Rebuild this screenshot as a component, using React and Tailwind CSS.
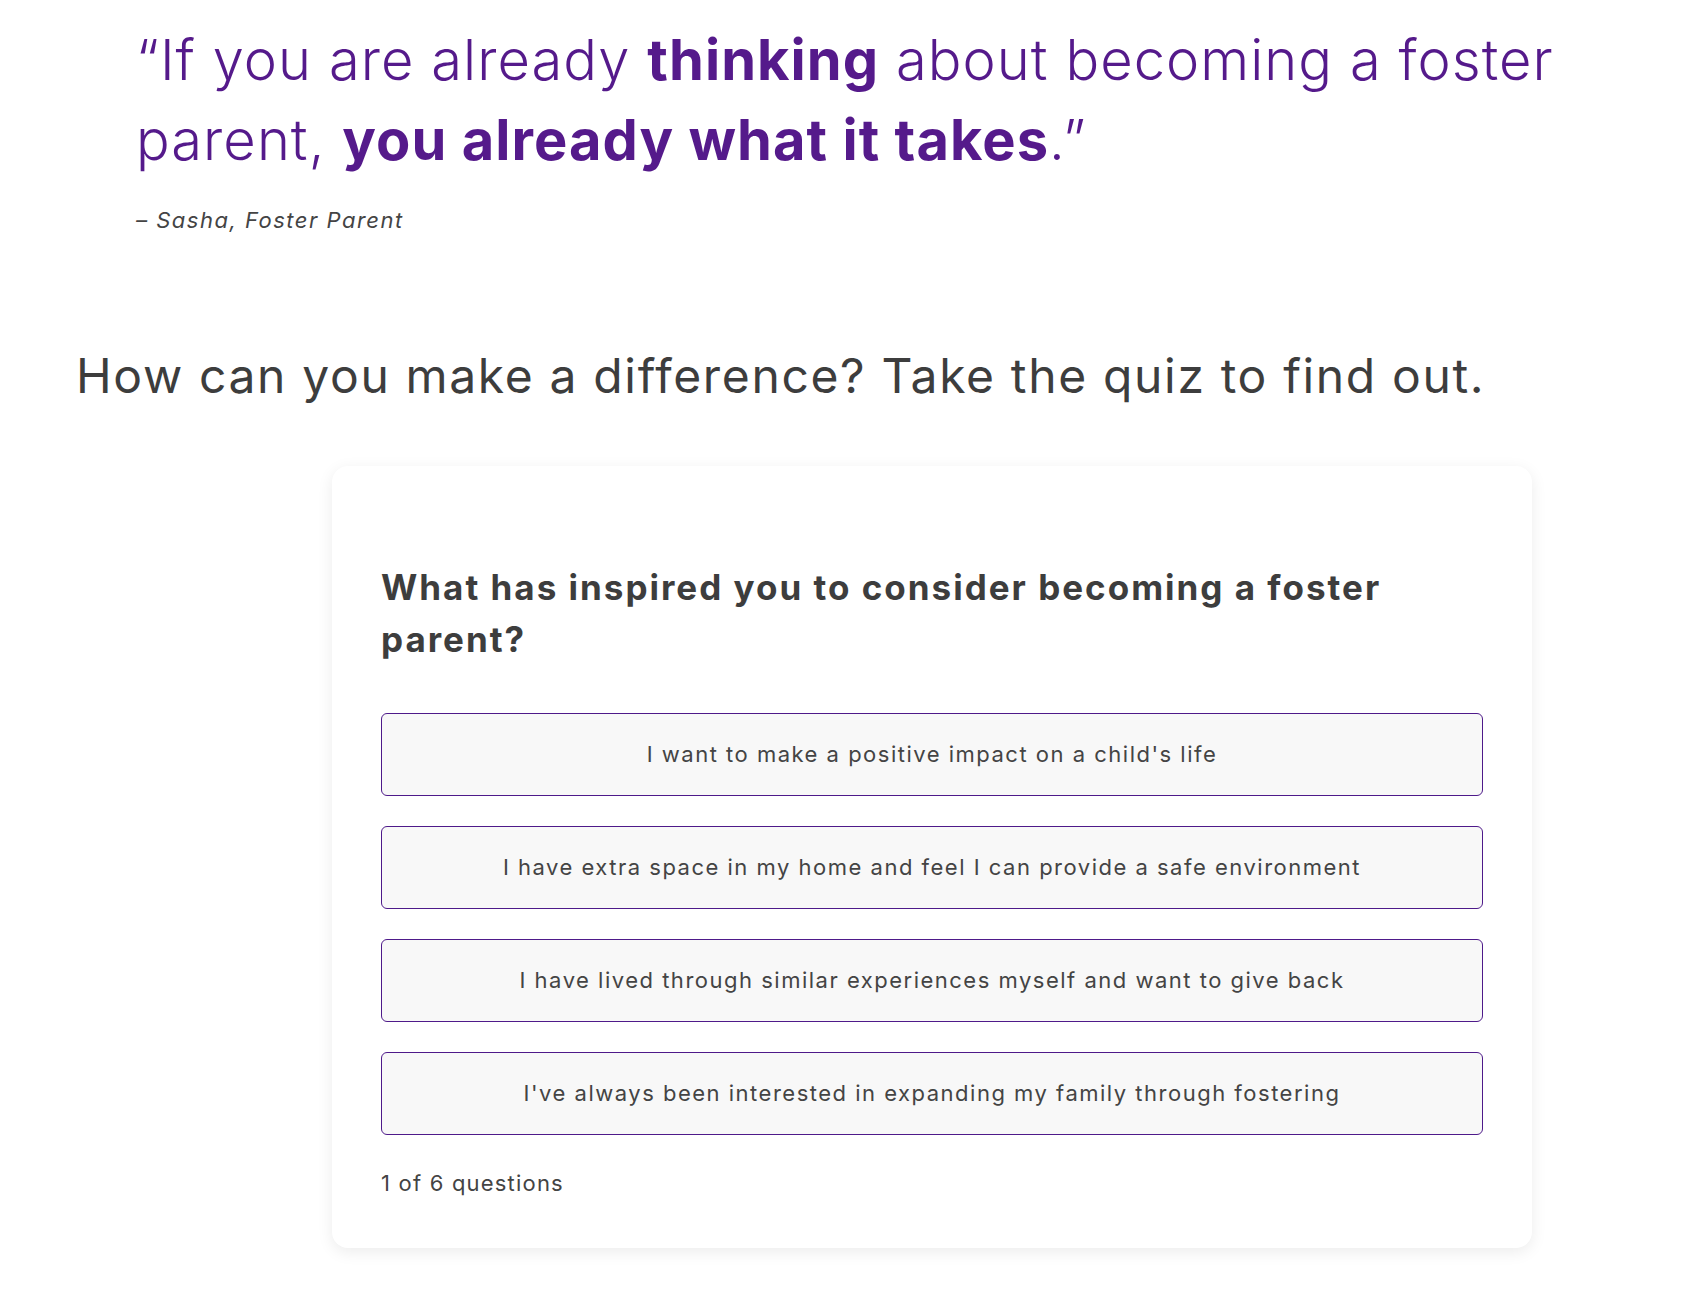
import React from 'react'

const options = [
  "I want to make a positive impact on a child's life",
  'I have extra space in my home and feel I can provide a safe environment',
  'I have lived through similar experiences myself and want to give back',
  "I've always been interested in expanding my family through fostering",
]

export default function App() {
  return (
    <div className="min-h-screen bg-white font-['Inter',sans-serif] text-[#3f3f3f]">
      <div className="pl-[136px] pt-[20px]">
        <p className="text-[56px] leading-[80px] text-[#551a8b] font-light tracking-[1.05px]">
          “If you are already <span className="font-bold">thinking</span> about becoming a foster
          <br />
          parent, <span className="font-bold">you already what it takes</span>.”
        </p>
        <p className="mt-[24px] text-[22px] italic tracking-[1.5px] text-[#444]">– Sasha, Foster Parent</p>
      </div>

      <h2 className="mt-[109px] pl-[76px] text-[48px] leading-[60px] tracking-[1.65px] text-[#3d3d3d] font-normal">
        How can you make a difference? Take the quiz to find out.
      </h2>

      <div className="mt-[60px] ml-[332px] w-[1200px] rounded-2xl bg-white px-[49px] pt-[95px] pb-[48px] shadow-[0_4px_16px_rgba(0,0,0,0.08)]">
        <h3 className="text-[35px] leading-[52px] tracking-[2px] font-bold text-[#3d3d3d]">
          What has inspired you to consider becoming a foster
          <br />
          parent?
        </h3>
        <div className="mt-[48px] flex flex-col gap-[30px]">
          {options.map((o) => (
            <button
              key={o}
              className="flex h-[83px] w-full items-center justify-center rounded-md border border-[#4e1a8a] bg-[#f8f8f8] text-[22px] tracking-[1.5px] text-[#444]"
            >
              {o}
            </button>
          ))}
        </div>
        <p className="mt-[32px] text-[22px] tracking-[1.2px] text-[#444]">1 of 6 questions</p>
      </div>
    </div>
  )
}
